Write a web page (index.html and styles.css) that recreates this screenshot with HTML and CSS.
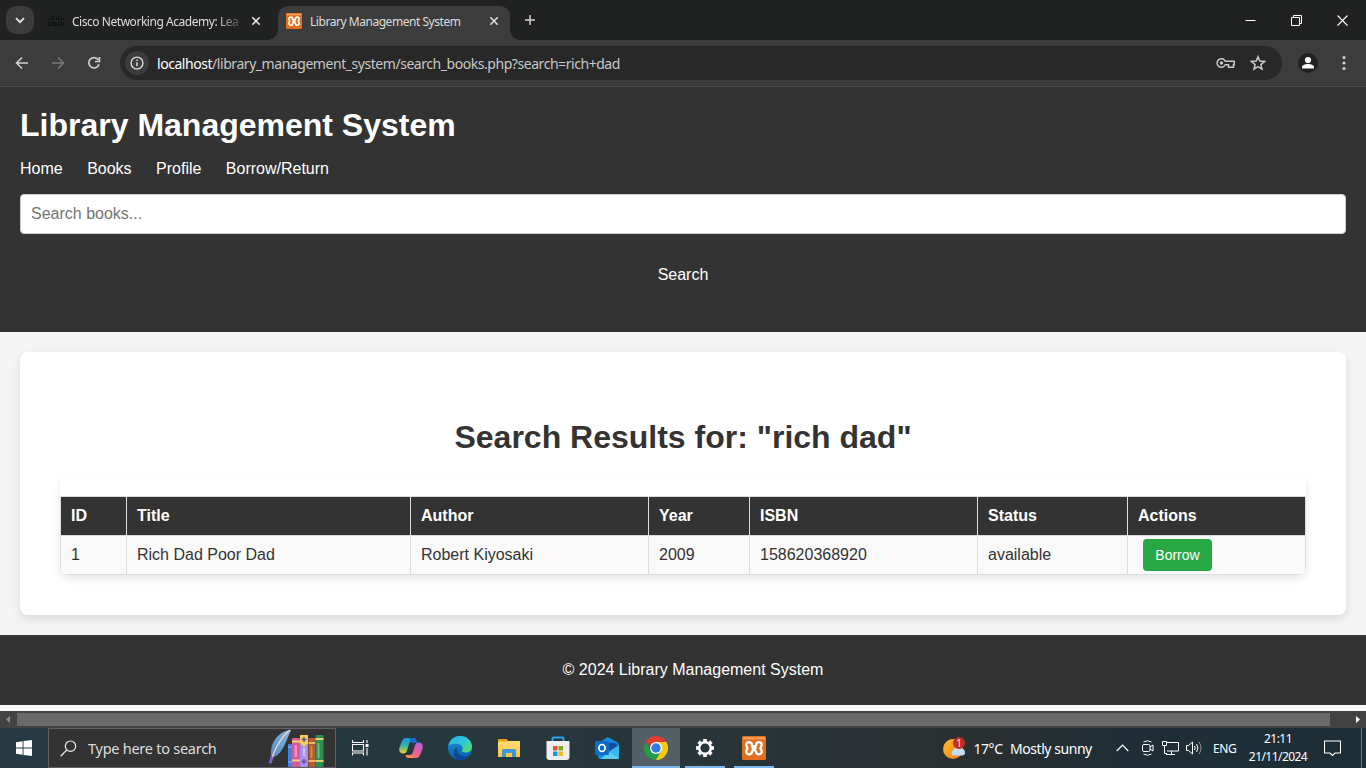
FILE: index.html
```html
<!DOCTYPE html>
<html lang="en">
<head>
<meta charset="utf-8">
<title>Library Management System</title>
<link rel="stylesheet" href="styles.css">
</head>
<body>
<svg class="defs" width="0" height="0">
  <defs>
    <linearGradient id="cpA" x1="0" y1="0" x2="0" y2="1"><stop offset="0" stop-color="#1494f0"/><stop offset=".5" stop-color="#35b6a0"/><stop offset="1" stop-color="#f1cf24"/></linearGradient>
    <linearGradient id="cpB" x1="1" y1="0" x2="0" y2="1"><stop offset="0" stop-color="#ae62ef"/><stop offset=".55" stop-color="#f2608c"/><stop offset="1" stop-color="#ffa044"/></linearGradient>
    <linearGradient id="edA" x1="0" y1="0" x2="1" y2="1"><stop offset="0" stop-color="#2aa8ee"/><stop offset=".5" stop-color="#31c7d8"/><stop offset="1" stop-color="#65e04f"/></linearGradient>
    <linearGradient id="edB" x1="0" y1="0" x2="0" y2="1"><stop offset="0" stop-color="#1596e4"/><stop offset="1" stop-color="#0c59a4"/></linearGradient>
    <linearGradient id="sun" x1="0" y1="0" x2="1" y2="1"><stop offset="0" stop-color="#fbc02e"/><stop offset="1" stop-color="#f07a12"/></linearGradient>
    <linearGradient id="fol" x1="0" y1="0" x2="0" y2="1"><stop offset="0" stop-color="#ffe07c"/><stop offset="1" stop-color="#fbc440"/></linearGradient>
    <linearGradient id="quill" x1="1" y1="0" x2="0" y2="1"><stop offset="0" stop-color="#8cb1e6"/><stop offset=".6" stop-color="#5f9ccc"/><stop offset="1" stop-color="#7a55c8"/></linearGradient>
    <symbol id="xampp" viewBox="0 0 24 24">
      <rect width="24" height="24" rx="1.500" fill="#e0701f"/>
      <rect x="1" y="1" width="22" height="2.500" fill="#f49a56"/>
      <path d="M10 9.800C10 5 4.300 5.200 4.300 8.800C4.300 10.800 5.500 11.200 5.500 12.200C5.500 13.200 4.300 13.700 4.300 15.600C4.300 19.200 10 19.400 10 15.300L12 13.500L14 15.300C14 19.400 19.700 19.200 19.700 15.600C19.700 13.700 18.500 13.200 18.500 12.200C18.500 11.200 19.700 10.800 19.700 8.800C19.700 5.200 14 5 14 9.800L12 10.500Z" fill="none" stroke="#fff" stroke-width="2.400" stroke-linejoin="round"/>
      <path d="M9.500 12.200H14.500" stroke="#fff" stroke-width="2.400"/>
    </symbol>
    <symbol id="close" viewBox="0 0 10 10"><path d="M1.300 1.300l7.400 7.400M8.700 1.300l-7.400 7.400" stroke="#dedede" stroke-width="1.600"/></symbol>
  </defs>
</svg>

<div class="tabs">
  <div class="tab-search"><svg width="10" height="7" viewBox="0 0 10 7"><path d="M1 1.200l4 4 4-4" fill="none" stroke="#e3e3e3" stroke-width="1.900"/></svg></div>
  <div class="tab idle">
    <span class="cisco"><svg width="16" height="6" viewBox="0 0 16 6"><path d="M1 3v2M3.500 1.500V5M6 0v5.500M8.500 2v3M11 0v5.500M13.500 1.500V5M15.500 3v2" stroke="#0b0c0c" stroke-width="1"/></svg><b>cisco</b></span>
    <span class="tab-title fade">Cisco Networking Academy: Lea</span>
    <svg class="x" width="10" height="10"><use href="#close"/></svg>
  </div>
  <div class="tab active">
    <svg width="16" height="16"><use href="#xampp"/></svg>
    <span class="tab-title">Library Management System</span>
    <svg class="x" width="10" height="10"><use href="#close"/></svg>
  </div>
  <svg class="plus" width="12" height="12" viewBox="0 0 12 12"><path d="M6 1v10M1 6h10" stroke="#d2d2d2" stroke-width="1.500"/></svg>
  <div class="win">
    <svg width="11" height="11" viewBox="0 0 11 11"><path d="M.5 5.500h10" stroke="#fff"/></svg>
    <svg width="11" height="11" viewBox="0 0 11 11"><path d="M.5 2.500h8v8h-8zM2.500 2.500v-2h8v8h-2" fill="none" stroke="#fff"/></svg>
    <svg width="11" height="11" viewBox="0 0 11 11"><path d="M.5.500l10 10M10.500.500l-10 10" stroke="#fff" stroke-width="1.100"/></svg>
  </div>
</div>

<div class="toolbar">
  <div class="nav-icons">
    <svg width="14" height="14" viewBox="0 0 14 14"><path d="M13 7H2M7 1.500L1.500 7 7 12.500" fill="none" stroke="#cfcfcf" stroke-width="1.600"/></svg>
    <svg width="14" height="14" viewBox="0 0 14 14"><path d="M1 7h11M7 1.500L12.500 7 7 12.500" fill="none" stroke="#797979" stroke-width="1.600"/></svg>
    <svg width="14" height="14" viewBox="0 0 14 14"><path d="M12 8.200A5.200 5.200 0 1 1 11.200 3.700M12.400 1v4.500H8" fill="none" stroke="#cfcfcf" stroke-width="1.700"/></svg>
  </div>
  <div class="omnibox">
    <span class="info"><svg width="14" height="14" viewBox="0 0 14 14"><circle cx="7" cy="7" r="5.900" fill="none" stroke="#dcdcdc" stroke-width="1.400"/><path d="M7 6.300v4M7 3.500v1.500" stroke="#dcdcdc" stroke-width="1.500"/></svg></span>
    <span class="url"><b>localhost</b>/library_management_system/search_books.php?search=rich+dad</span>
    <svg class="key" width="20" height="12" viewBox="0 0 20 12"><path d="M9.300 4.200A4.300 4.300 0 1 0 9.300 7.800H12.500V10.200H17.500V7.800H18.200V4.200Z" fill="none" stroke="#c9c9c9" stroke-width="1.500"/><circle cx="5.500" cy="6" r="1.700" fill="#c9c9c9"/></svg>
    <svg class="star" width="16" height="16" viewBox="0 0 16 16"><path d="M8 1.700l1.800 4.400 4.700.4-3.600 3.100 1.100 4.600L8 11.700l-4 2.500 1.100-4.600L1.500 6.500l4.700-.4z" fill="none" stroke="#c9c9c9" stroke-width="1.500"/></svg>
  </div>
  <svg class="avatar" width="20" height="20" viewBox="0 0 20 20"><circle cx="10" cy="10" r="10" fill="#202221"/><circle cx="10" cy="7" r="3.100" fill="#fff"/><path d="M4 15.500v-1.500c0-2 3-3 6-3s6 1 6 3v1.500z" fill="#fff"/></svg>
  <svg class="dots" width="4" height="16" viewBox="0 0 4 16"><g fill="#cfcfcf"><circle cx="2" cy="2.500" r="1.600"/><circle cx="2" cy="8" r="1.600"/><circle cx="2" cy="13.500" r="1.600"/></g></svg>
</div>

<header class="site-header">
  <h1>Library Management System</h1>
  <nav><a>Home</a><a>Books</a><a>Profile</a><a>Borrow/Return</a></nav>
  <form><input type="text" placeholder="Search books..."><button type="button">Search</button></form>
</header>

<main class="page">
  <section class="card">
    <h2>Search Results for: "rich dad"</h2>
    <div class="table-box">
      <table>
        <colgroup><col class="c1"><col class="c2"><col class="c3"><col class="c4"><col class="c5"><col class="c6"><col class="c7"></colgroup>
        <thead><tr><th>ID</th><th>Title</th><th>Author</th><th>Year</th><th>ISBN</th><th>Status</th><th>Actions</th></tr></thead>
        <tbody><tr><td>1</td><td>Rich Dad Poor Dad</td><td>Robert Kiyosaki</td><td>2009</td><td>158620368920</td><td>available</td><td class="act"><a class="borrow">Borrow</a></td></tr></tbody>
      </table>
    </div>
  </section>
</main>
<footer class="site-footer">© 2024 Library Management System</footer>
<div class="gap"></div>
<div class="scrollbar">
  <svg width="17" height="17" viewBox="0 0 17 17"><path d="M10 5v7L6 8.500z" fill="#8c8c8c"/></svg>
  <span class="thumb"></span>
  <svg class="right" width="17" height="17" viewBox="0 0 17 17"><path d="M7 5v7l4-3.500z" fill="#fff"/></svg>
</div>

<div class="taskbar">
  <div class="start"><svg width="16" height="16" viewBox="0 0 16 16"><path d="M0 2.200L6.600 1.300V7.500H0zM7.500 1.100L16 0V7.500H7.500zM0 8.400H6.600V14.700L0 13.800zM7.500 8.400H16V16L7.500 14.900z" fill="#fff"/></svg></div>
  <div class="search">
    <svg width="17" height="17" viewBox="0 0 17 17"><circle cx="10.500" cy="6.200" r="5.200" fill="none" stroke="#eee" stroke-width="1.200"/><path d="M6.800 9.900L.7 16.200" stroke="#eee" stroke-width="1.300"/></svg>
    <span>Type here to search</span>
    <svg class="books" width="56" height="38" viewBox="0 0 56 38">
      <path d="M23 1C11 2 2 13 3 26L1 33l2 2 3-7C15 24 18 12 23 1z" fill="url(#quill)"/>
      <path d="M22 1C13 8 7 19 2 34" fill="none" stroke="#e9dfce" stroke-width="1.300"/>
      <path d="M3.500 27L1 34l2 .500L5 28z" fill="#8254ce"/>
      <rect x="20" y="15" width="4.500" height="23" fill="#3f7fe8"/><path d="M20 18h4.500M20 33h4.500" stroke="#8ebcff"/>
      <rect x="24" y="9" width="8" height="29" rx="1" fill="#d45a9d"/><path d="M24 12.500h8M24 31.500h8" stroke="#f6cf73" stroke-width="2"/><rect x="26.500" y="16" width="2.500" height="12" fill="#ef91c1"/>
      <rect x="32" y="6" width="8" height="32" rx="1" fill="#a891ea"/><path d="M32 6h8v8l-4 4-4-4z" fill="#f7cf55"/><path d="M36 8v5M33.500 10.500h5M36 30v5M33.500 32.500h5" stroke="#6d4a9f" stroke-width="1.500"/><path d="M36 19v8" stroke="#d2c2fa" stroke-width="2"/>
      <rect x="40.500" y="9" width="7" height="29" rx="1" fill="#b65b2d"/><path d="M40.500 14h7M40.500 32h7" stroke="#f2b45c" stroke-width="2"/><path d="M43.500 17v12" stroke="#d98249" stroke-width="2"/>
      <rect x="47.500" y="6" width="8" height="32" rx="1" fill="#2e8c55"/><path d="M47.500 10h8M47.500 32h8" stroke="#d6d47a" stroke-width="2"/><path d="M50.500 14v15" stroke="#6dbd80" stroke-width="2"/>
    </svg>
  </div>
  <div class="apps">
    <span><svg width="17" height="16" viewBox="0 0 17 16"><path d="M.5 0v2.500h11V0M.5 15.500V13h11v2.500M.5 4.500h11v6.500H.5zM15 0v3M15 8v7.500" fill="none" stroke="#fff" stroke-width="1.100"/><rect x="13.500" y="4" width="3" height="3" fill="#fff"/></svg></span>
    <span><svg width="24" height="22" viewBox="0 0 24 22"><path d="M7 1h7c2 0 3 1 3.500 3h-4c-2 0-3 1.200-3.500 3L8 13.500c-.7 2-1.500 3-3.500 3C1 16.500-.5 14 .5 10.500L3 4c.8-2 2-3 4-3z" fill="url(#cpA)"/><path d="M7 1h7c2 0 3 1 3.500 3L18 6h-5L10 1z" fill="#176bce"/><path d="M17 21h-7c-2 0-3-1-3.500-3h4c2 0 3-1.200 3.500-3L16 8.500c.7-2 1.500-3 3.500-3 3.500 0 5 2.500 4 6L21 18c-.8 2-2 3-4 3z" fill="url(#cpB)"/></svg></span>
    <span><svg width="24" height="24" viewBox="0 0 24 24"><circle cx="12" cy="12" r="12" fill="url(#edB)"/><path d="M.3 10C1.500 4 6 0 12 0c7 0 12 5 12 10.500 0 4-3 6-6.500 6-3 0-4-1-3.500-2 2-2.500.5-6-4.500-6.500C5.500 7.500 2 8.500.3 10z" fill="url(#edA)"/><path d="M9 11c-1.500 5 2 9.500 8 9.500 2 0 3.500-.5 5-1.500-3 4.500-9 6.300-13.500 3.500C5 20 5 13 9 11z" fill="#0d478f"/></svg></span>
    <span><svg width="22" height="18" viewBox="0 0 22 18"><path d="M0 0h8.500l1.500 2H22v16H0z" fill="url(#fol)"/><path d="M0 0h8.500l1.500 2.500H0z" fill="#e3a21a"/><path d="M4 18v-6.500q0-1.500 1.500-1.500h11q1.500 0 1.500 1.500V18h-4v-4H8v4z" fill="#3c97df"/></svg></span>
    <span><svg width="24" height="24" viewBox="0 0 24 24"><path d="M6.500 6V2.500q0-1 1-1h9q1 0 1 1V6" fill="none" stroke="#27a5e8" stroke-width="2"/><path d="M.500 5h23v16q0 3-3 3h-17q-3 0-3-3z" fill="#eee"/><path d="M7 10h4.500v4.500H7z" fill="#e8502b"/><path d="M12.500 10H17v4.500h-4.500z" fill="#77ad22"/><path d="M7 15.500h4.500V20H7z" fill="#159ce0"/><path d="M12.500 15.500H17V20h-4.500z" fill="#f8b814"/></svg></span>
    <span><svg width="24" height="22" viewBox="0 0 24 22"><path d="M3 6L13 0l10.500 6V20q0 2-2 2H5q-2 0-2-2z" fill="#1689dc"/><path d="M10 6h10l3.500 4L14 16z" fill="#154c94"/><path d="M14 14.500L24 8v12q0 2-2 2H5z" fill="#35b9ed"/><path d="M14 15l10 6q-1 1-2 1H6z" fill="#58cdf6"/><rect y="4" width="14" height="14" rx="1" fill="#0d6bc9"/><ellipse cx="7" cy="11" rx="3.100" ry="3.500" fill="none" stroke="#fff" stroke-width="1.700"/></svg></span>
    <span class="run cur"><svg width="24" height="24" viewBox="0 0 24 24"><path d="M12 12L1.600 6A12 12 0 0 1 22.400 6z" fill="#e33b2e"/><path d="M12 12V6h10.400A12 12 0 0 1 12 24z" fill="#fac815"/><path d="M12 12l5.200 3L12 24A12 12 0 0 1 1.600 6l5.200 9z" fill="#259b48"/><circle cx="12" cy="12" r="6" fill="#fff"/><circle cx="12" cy="12" r="4.700" fill="#3379e6"/></svg></span>
    <span class="run"><svg width="20" height="20" viewBox="-10 -10 20 20"><g fill="#fff"><rect x="-1.800" y="-9" width="3.600" height="18"/><rect x="-1.800" y="-9" width="3.600" height="18" transform="rotate(45)"/><rect x="-1.800" y="-9" width="3.600" height="18" transform="rotate(90)"/><rect x="-1.800" y="-9" width="3.600" height="18" transform="rotate(135)"/><circle r="7"/></g><circle r="4.600" fill="#28353a"/></svg></span>
    <span class="run"><svg width="24" height="24"><use href="#xampp"/></svg></span>
  </div>
  <div class="weather">
    <svg width="23" height="23" viewBox="0 0 23 23"><circle cx="10" cy="12" r="10" fill="url(#sun)"/><path d="M10.500 18.500a2.700 2.700 0 0 1 0-5.200 4 4 0 0 1 7-1.500 3.300 3.300 0 0 1 2 6.700z" fill="#c3dcf8"/><circle cx="16" cy="6" r="6" fill="#c62b22"/><text x="16" y="9.500" text-anchor="middle" class="badge">1</text></svg>
    <span>17°C</span><span>Mostly sunny</span>
  </div>
  <div class="tray">
    <svg class="t1" width="13" height="8" viewBox="0 0 13 8"><path d="M.7 7l5.800-5.800L12.300 7" fill="none" stroke="#fff" stroke-width="1.200"/></svg>
    <svg class="t2" width="12" height="16" viewBox="0 0 12 16"><rect x=".5" y="4.500" width="7.500" height="7" rx="1.500" fill="none" stroke="#fff"/><path d="M8 7l3-2v6L8 9M1.500 2q4-2.500 8 0M1.500 14q4 2.500 8 0" fill="none" stroke="#fff"/></svg>
    <svg class="t3" width="17" height="14" viewBox="0 0 17 14"><path d="M5 1.500h11.500v8.500H5M4 13.500h9M9.500 10v3.500M.500.500h4v4h-4zM2.500 4.500v8H5" fill="none" stroke="#fff"/></svg>
    <svg class="t4" width="17" height="14" viewBox="0 0 17 14"><path d="M.500 4.500h2L6.500 1v12L2.500 9.500h-2zM8.500 5q1.500 2 0 4M10.500 3q3 4 0 8" fill="none" stroke="#fff"/><path d="M13 1q4 6 0 12" fill="none" stroke="#8a9498"/></svg>
    <span class="lang">ENG</span>
    <span class="clock"><i>21:11</i><i>21/11/2024</i></span>
    <svg class="note" width="17" height="17" viewBox="0 0 17 17"><path d="M.500 1h16v12h-5.500L8.500 15.500 6 13H.500z" fill="none" stroke="#fff" stroke-width="1.100"/></svg>
  </div>
</div>
</body>
</html>
```
FILE: styles.css
```css
* { box-sizing: border-box; }
body { margin: 0; width: 1366px; height: 768px; overflow: hidden; display: flex; flex-direction: column; font-family: "Liberation Sans", Arial, sans-serif; font-size: 16px; color: #333; background: #f4f4f4; }
body > div, header, main, footer { flex: none; }
svg { display: block; flex: none; }
.defs { position: absolute; }

.tabs { height: 40px; background: #202221; display: flex; font-family: "Noto Sans", sans-serif; font-size: 12px; color: #dedede; }
.tab-search { width: 28px; height: 28px; margin: 6px 0 0 6px; border-radius: 10px; background: #3c3c3c; display: grid; place-items: center; }
.tab { display: flex; align-items: center; height: 34px; margin-top: 6px; padding-bottom: 5px; position: relative; white-space: nowrap; }
.idle { width: 244px; padding-left: 14px; }
.active { width: 232px; padding-left: 8px; background: #3c3c3c; border-radius: 10px 10px 0 0; }
.active::before, .active::after { content: ""; position: absolute; bottom: 0; width: 10px; height: 10px; }
.active::before { left: -10px; background: radial-gradient(circle at 0 0, transparent 9.500px, #3c3c3c 10px); }
.active::after { right: -10px; background: radial-gradient(circle at 100% 0, transparent 9.500px, #3c3c3c 10px); }
.cisco { width: 16px; display: flex; flex-direction: column; align-items: center; color: #0b0c0c; font-size: 7px; line-height: 6px; }
.tab-title { margin-left: 8px; width: 173px; letter-spacing: -.46px; padding-top: 1px; }
.fade { -webkit-mask-image: linear-gradient(90deg, #000 145px, transparent 173px); mask-image: linear-gradient(90deg, #000 145px, transparent 173px); }
.x { margin-left: 6px; }
.plus { margin: 14px 0 0 14px; }
.win { margin: 15px 18px 0 auto; display: flex; gap: 35px; }

.toolbar { height: 47px; background: #3c3c3c; border-bottom: 1px solid #4a4a4a; display: flex; align-items: center; }
.nav-icons { display: flex; gap: 22px; padding-left: 15px; width: 120px; }
.omnibox { width: 1162px; height: 34px; border-radius: 17px; background: #282828; display: flex; align-items: center; padding-left: 5px; }
.info { width: 24px; height: 24px; border-radius: 50%; background: #3c3c3c; display: grid; place-items: center; }
.url { margin-left: 8px; flex: 1; font: 14px "Noto Sans", sans-serif; letter-spacing: -.45px; color: #c7c7c7; }
.url b { font-weight: 400; color: #fff; }
.key { margin-right: 14px; }
.star { margin-right: 16px; }
.avatar { margin-left: 16px; }
.dots { margin-left: 24px; }

.site-header { height: 245px; background: #333; color: #fff; padding: 20px; }
.site-header h1 { margin: 0; font-size: 32px; line-height: 37px; }
nav { display: flex; gap: 24.450px; margin-top: 16px; line-height: 18px; }
form { margin-top: 16px; }
input { display: block; width: 100%; height: 40px; padding: 0 10px; border: 1px solid #ccc; border-radius: 4px; font: 16px "Liberation Sans", Arial, sans-serif; background: #fff; }
input::placeholder { color: #757575; }
button { display: block; width: 100%; margin-top: 21px; height: 40px; border: 0; background: none; color: #fff; font: 16px "Liberation Sans", Arial, sans-serif; }

.page { padding: 20px; height: 303px; background: #f4f4f4; }
.card { height: 263px; background: #fff; border-radius: 8px; padding: 66px 40px 0; box-shadow: 0 4px 8px rgba(0,0,0,.1); }
.card h2 { margin: 0; text-align: center; font-size: 32px; line-height: 38px; }
.table-box { margin-top: 20px; padding-top: 20px; height: 99px; border-radius: 8px; overflow: hidden; box-shadow: 0 4px 8px rgba(0,0,0,.1); }
table { width: 1246px; table-layout: fixed; border-collapse: collapse; }
.c1 { width: 66px; } .c2 { width: 284px; } .c3 { width: 238px; } .c4 { width: 101px; } .c5 { width: 228px; } .c6 { width: 150px; } .c7 { width: 178px; }
th, td { height: 39px; padding: 0 10px; border: 1px solid #ddd; text-align: left; line-height: 18px; }
th { background: #333; color: #fff; }
td { background: #f9f9f9; }
.act { padding-left: 15px; }
.borrow { display: block; width: 69px; height: 32px; border-radius: 4px; background: #28a745; color: #fff; font-size: 14px; line-height: 32px; text-align: center; }

.site-footer { height: 70px; background: #333; color: #fff; line-height: 69px; text-align: center; padding-left: 20px; }
.gap { height: 6px; background: #f8f8f8; }
.scrollbar { height: 17px; background: #424242; display: flex; align-items: center; }
.thumb { width: 1313px; height: 13px; background: #696969; }
.right { margin-left: auto; }

.taskbar { height: 40px; display: flex; background: linear-gradient(90deg, #263a43 0, #263940 25%, #28353a 50%, #2a2f31 72%, #1f2e36 82%, #1d2e37 100%); color: #fff; font-family: "Noto Sans", sans-serif; }
.start { width: 48px; display: grid; place-items: center; }
.search { width: 288px; height: 40px; border: 1px solid #606060; background: #333; display: flex; align-items: center; padding-left: 11px; font-size: 14.500px; letter-spacing: -.26px; color: #ddd; white-space: nowrap; }
.search span { margin-left: 11px; width: 180px; }
.books { align-self: flex-end; }
.apps { display: flex; gap: 1px; }
.apps span { width: 48px; height: 40px; display: grid; place-items: center; }
.apps span:first-child { margin-right: 2px; }
.apps .run { background: linear-gradient(#7ab8ee, #7ab8ee) 50% 100% / 40px 2px no-repeat; }
.apps .cur { background: linear-gradient(#7ab8ee, #7ab8ee) 50% 100% / 48px 2px no-repeat #536066; }
.weather { margin-left: 165px; width: 173px; display: flex; align-items: center; gap: 7.500px; font-size: 14px; letter-spacing: -.45px; white-space: nowrap; }
.badge { font: 10px "Noto Sans", sans-serif; fill: #fff; letter-spacing: 0; }
.tray { flex: 1; display: flex; align-items: center; font-size: 12px; white-space: nowrap; }
.t2 { margin-left: 13px; }
.t3 { margin-left: 8px; }
.t4 { margin-left: 7px; }
.lang { margin-left: 10px; width: 24px; letter-spacing: -.4px; }
.clock { margin-left: 10px; width: 62px; text-align: center; letter-spacing: -.55px; }
.clock i { display: block; font-style: normal; line-height: 18px; }
.note { margin-left: 15px; }
.tray::after { content: ""; width: 1px; height: 40px; margin-left: auto; margin-right: 4px; background: #707a7f; }
```
